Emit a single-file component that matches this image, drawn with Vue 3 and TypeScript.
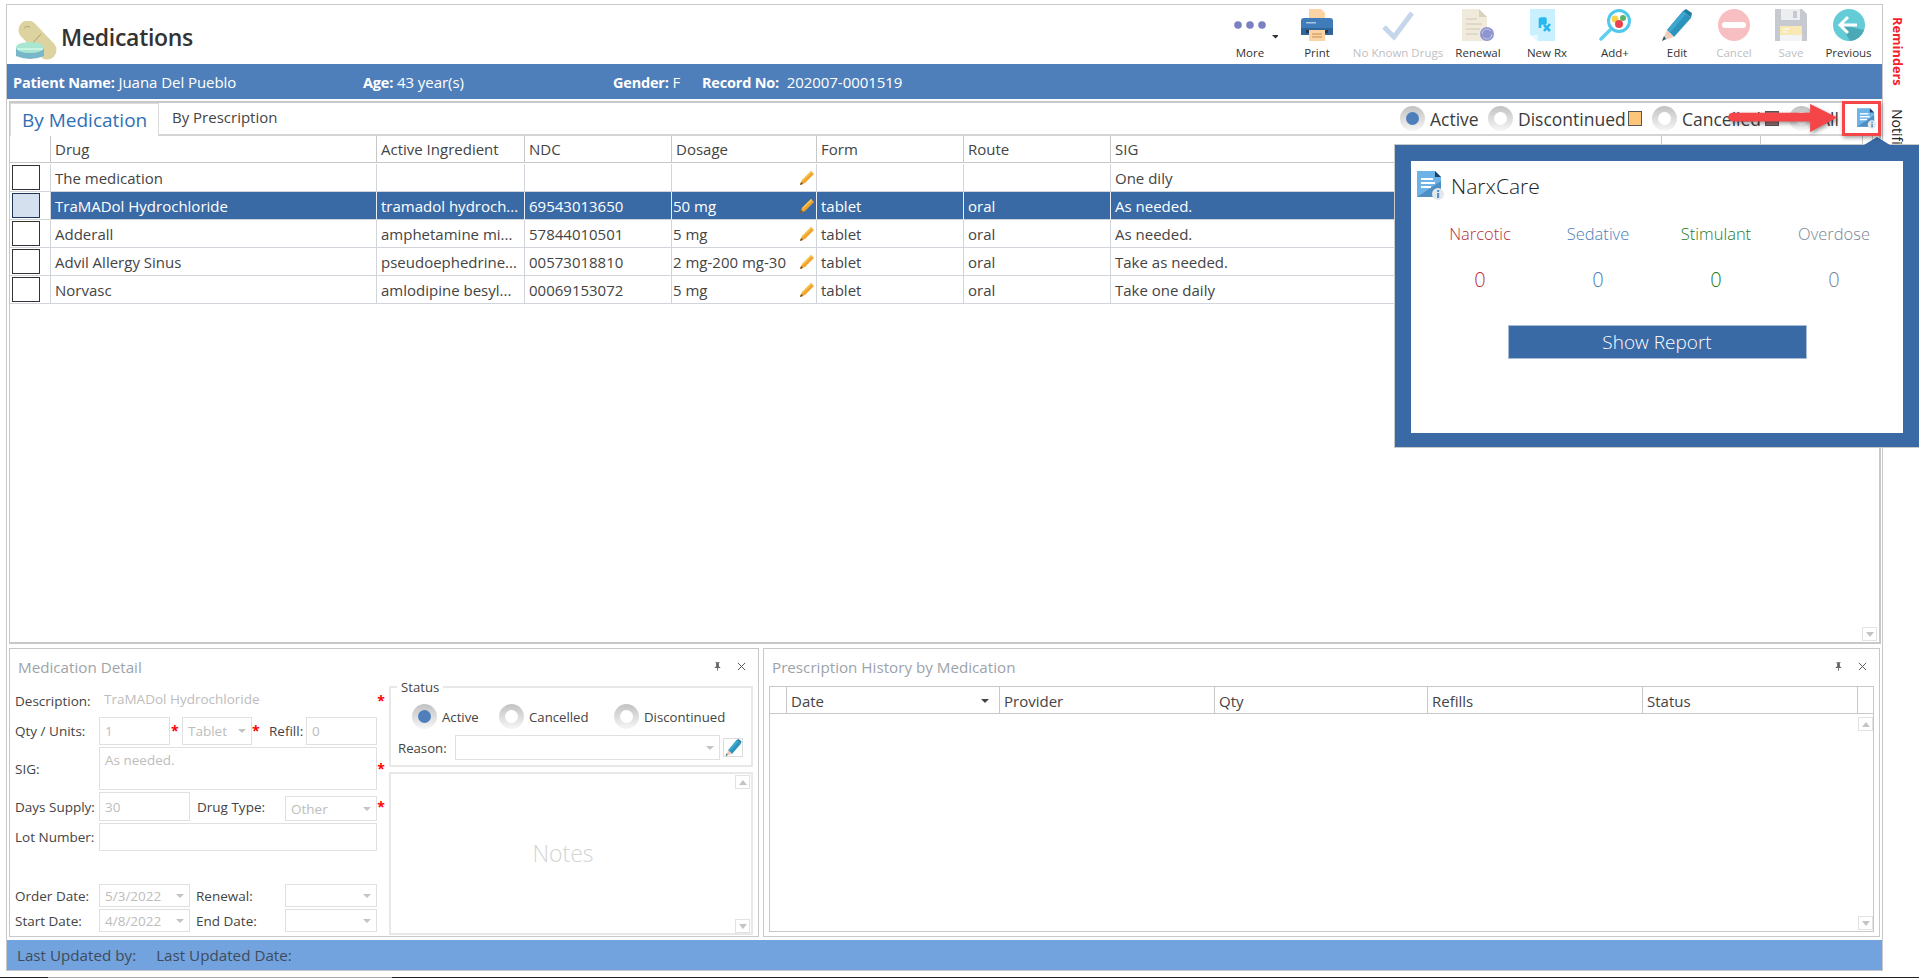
<script setup lang="ts">
interface Med { drug: string; ing: string; ndc: string; dose: string; form: string; route: string; sig: string; sel?: boolean }
const meds: Med[] = [
  { drug: 'The medication', ing: '', ndc: '', dose: '', form: '', route: '', sig: 'One dily' },
  { drug: 'TraMADol Hydrochloride', ing: 'tramadol hydroch...', ndc: '69543013650', dose: '50 mg', form: 'tablet', route: 'oral', sig: 'As needed.', sel: true },
  { drug: 'Adderall', ing: 'amphetamine mi...', ndc: '57844010501', dose: '5 mg', form: 'tablet', route: 'oral', sig: 'As needed.' },
  { drug: 'Advil Allergy Sinus', ing: 'pseudoephedrine...', ndc: '00573018810', dose: '2 mg-200 mg-30', form: 'tablet', route: 'oral', sig: 'Take as needed.' },
  { drug: 'Norvasc', ing: 'amlodipine besyl...', ndc: '00069153072', dose: '5 mg', form: 'tablet', route: 'oral', sig: 'Take one daily' },
]
const heads: string[] = ['', 'Drug', 'Active Ingredient', 'NDC', 'Dosage', 'Form', 'Route', 'SIG', '', '', '', '']
const histHeads: string[] = ['', 'Date', 'Provider', 'Qty', 'Refills', 'Status', '']
const narx = [
  { label: 'Narcotic', cls: 'red' },
  { label: 'Sedative', cls: 'blue' },
  { label: 'Stimulant', cls: 'green' },
  { label: 'Overdose', cls: 'grey' },
]
</script>

<template>
  <div class="page">
    <svg class="defs" width="0" height="0">
      <symbol id="pen" viewBox="0 0 32 32">
        <polygon points="6,21 22,2 30,9 13,28" fill="#2b93bc" />
        <polygon points="6,21 22,2 25,5 9,24" fill="#3fa7cf" />
        <polygon points="22,2 25,0 31,4 30,9" fill="#1f7ea3" />
        <polygon points="6,21 13,28 1,32" fill="#f5cdb6" />
        <polygon points="3,27 5,30 1,32" fill="#1d5f7a" />
      </symbol>
      <symbol id="file" viewBox="0 0 28 29">
        <polygon points="0,0 18,0 24,6 24,26 0,26" fill="#6db3e8" />
        <polygon points="0,26 24,10 24,26" fill="#4f8fc4" />
        <polygon points="18,0 24,6 18,6" fill="#1f3f66" />
        <rect x="4" y="7" width="12" height="2" fill="#fff" />
        <rect x="4" y="11" width="14" height="2" fill="#fff" />
        <rect x="4" y="15" width="10" height="2" fill="#fff" />
        <circle cx="21" cy="23" r="6" fill="#e3e8ee" />
        <rect x="20" y="22" width="2.2" height="5" fill="#5b93c6" />
        <rect x="20" y="19" width="2.2" height="2" fill="#5b93c6" />
      </symbol>
      <symbol id="pin" viewBox="0 0 10 12">
        <path d="M2 0h6v1H7v5l2 1v1H5.6v4H4.4V8H1V7l2-1V1H2z" fill="#666" />
      </symbol>
      <symbol id="close" viewBox="0 0 10 10">
        <path d="M1 1l8 8M9 1L1 9" stroke="#555" stroke-width="1.1" fill="none" />
      </symbol>
    </svg>

    <div class="desk">
      <div class="window">
        <header class="titlebar">
          <div class="brand">
            <svg class="logo" viewBox="0 0 41 39">
              <line x1="12" y1="9" x2="31" y2="29" stroke="#ddd3a0" stroke-width="19" stroke-linecap="round" />
              <line x1="25" y1="13" x2="15" y2="24" stroke="#a89f6f" stroke-width="1" />
              <path d="M8 7q3-3 6-1" stroke="#a89f6f" fill="none" stroke-width="0.8" />
              <path d="M0 27v8q14 6 28 0v-8z" fill="#79b6c9" />
              <ellipse cx="14" cy="26.500" rx="14" ry="5.500" fill="#a8e6cf" />
              <path d="M1 28h26" stroke="#e9fff6" stroke-width="1" />
            </svg>
            <h1>Medications</h1>
          </div>
          <nav class="tools">
            <div class="tool">
              <svg class="ic more" viewBox="0 0 44 32">
                <circle cx="4" cy="16" r="3.800" fill="#7a80c2" /><circle cx="16" cy="16" r="3.800" fill="#7a80c2" /><circle cx="28" cy="16" r="3.800" fill="#7a80c2" />
                <polygon points="38,26 45,26 41.500,29.500" fill="#333" />
              </svg>
              <span>More</span>
            </div>
            <div class="tool">
              <svg class="ic" viewBox="0 0 32 32">
                <polygon points="8,0 20,0 24,4 24,12 8,12" fill="#fbd3a5" />
                <rect x="0" y="9" width="32" height="17" rx="3" fill="#3f7cb8" />
                <rect x="0" y="19" width="32" height="7" fill="#2f6598" />
                <rect x="5" y="13" width="10" height="1.500" fill="#a9c8e6" />
                <rect x="5" y="21" width="22" height="3" fill="#1d3b5a" />
                <rect x="8" y="21" width="16" height="11" fill="#fbd3a5" />
                <path d="M11 25h10M11 28h10" stroke="#c98f50" stroke-width="1" />
              </svg>
              <span>Print</span>
            </div>
            <div class="tool off">
              <svg class="ic" viewBox="0 0 32 32">
                <path d="M2 18l10 10L30 4" fill="none" stroke="#c5d6ea" stroke-width="5" />
              </svg>
              <span>No Known Drugs</span>
            </div>
            <div class="tool">
              <svg class="ic" viewBox="0 0 32 32">
                <polygon points="0,0 17,0 25,8 25,32 0,32" fill="#efeadb" />
                <polygon points="17,0 25,8 17,8" fill="#d8d2bd" />
                <path d="M4 10h11M4 15h16M4 20h14M4 25h12" stroke="#cfc8ae" stroke-width="1" />
                <circle cx="25" cy="25" r="7" fill="#8e94d0" />
                <path d="M20 25a5 5 0 0 1 9-3M30 25a5 5 0 0 1-9 3" stroke="#c4c8ea" fill="none" stroke-width="1" />
              </svg>
              <span>Renewal</span>
            </div>
            <div class="tool">
              <svg class="ic rx" viewBox="0 0 25 32">
                <polygon points="0,0 25,0 25,32 8,32 0,26" fill="#c9f0ff" />
                <polygon points="0,26 8,26 8,32" fill="#e6f9ff" />
                <rect x="10" y="9" width="6" height="6" rx="1" fill="#28b8ee" stroke="#28b8ee" stroke-width="1.500" />
                <path d="M10 9v10M14 16l6 6M20 15l-6 7" stroke="#28b8ee" stroke-width="2.600" fill="none" />
              </svg>
              <span>New Rx</span>
            </div>
            <div class="tool">
              <svg class="ic" viewBox="0 0 32 32">
                <line x1="11" y1="21" x2="2" y2="30" stroke="#5fd0ee" stroke-width="3.500" stroke-linecap="round" />
                <circle cx="20" cy="12" r="10.500" fill="#fff" stroke="#4fc8ec" stroke-width="3" />
                <circle cx="16" cy="10" r="3.500" fill="#f6d44a" />
                <circle cx="24" cy="9" r="3" fill="#58b368" />
                <circle cx="20" cy="15" r="4" fill="#e8434f" />
              </svg>
              <span>Add+</span>
            </div>
            <div class="tool">
              <svg class="ic"><use href="#pen" /></svg>
              <span>Edit</span>
            </div>
            <div class="tool off">
              <svg class="ic" viewBox="0 0 32 32">
                <circle cx="16" cy="16" r="16" fill="#f8bfc2" />
                <rect x="4" y="13" width="24" height="6" rx="3" fill="#fff" />
              </svg>
              <span>Cancel</span>
            </div>
            <div class="tool off">
              <svg class="ic" viewBox="0 0 32 32">
                <polygon points="0,0 27,0 32,5 32,32 0,32" fill="#c6c9d0" />
                <rect x="6" y="0" width="19" height="11" fill="#eceef1" />
                <rect x="18" y="2" width="4" height="7" fill="#c6c9d0" />
                <rect x="5" y="17" width="22" height="15" fill="#f3f4f6" />
                <rect x="5" y="17" width="22" height="9" fill="#f8e9b4" />
                <path d="M8 20h7M8 23h4" stroke="#fff" stroke-width="1" />
              </svg>
              <span>Save</span>
            </div>
            <div class="tool">
              <svg class="ic" viewBox="0 0 32 32">
                <circle cx="16" cy="16" r="16" fill="#63ccd6" />
                <path d="M8 16L31 21A16 16 0 0 1 17 32z" fill="#4aa9b5" />
                <path d="M15 8l-8 8 8 8M7 16h17" stroke="#fff" stroke-width="3" fill="none" />
              </svg>
              <span>Previous</span>
            </div>
          </nav>
        </header>

        <div class="patient">
          <span class="p1"><b>Patient Name:</b> Juana Del Pueblo</span>
          <span class="p2"><b>Age:</b> 43 year(s)</span>
          <span class="p3"><b>Gender:</b> F</span>
          <span class="p4"><b>Record No:</b>&nbsp; 202007-0001519</span>
        </div>

        <section class="main">
          <div class="tabs">
            <div class="tab active">By Medication</div>
            <div class="tab">By Prescription</div>
            <div class="filters">
              <i class="radio on"></i><span class="f f-a">Active</span>
              <i class="radio"></i><span class="f f-d">Discontinued</span><i class="swatch orange"></i>
              <i class="radio"></i><span class="f f-c">Cancelled</span><i class="swatch brown"></i>
              <i class="radio"></i><span class="f f-l">All</span>
              <svg class="file-btn"><use href="#file" /></svg>
            </div>
          </div>
          <div class="grid">
            <div class="gcell head" v-for="(h, i) in heads" :key="'h' + i">{{ h }}</div>
            <template v-for="m in meds" :key="m.drug">
              <div class="gcell chk"><i class="box" :class="{ sel: m.sel }"></i></div>
              <div class="gcell" :class="{ sel: m.sel }">{{ m.drug }}</div>
              <div class="gcell" :class="{ sel: m.sel }">{{ m.ing }}</div>
              <div class="gcell" :class="{ sel: m.sel }">{{ m.ndc }}</div>
              <div class="gcell dose" :class="{ sel: m.sel }">
                <span>{{ m.dose }}</span>
                <svg class="pencil" viewBox="0 0 16 16">
                  <path d="M1 15l2-5L12 1l3 3-9 9z" fill="#f0a52a" />
                  <path d="M3 10L12 1l1 1-9 9z" fill="#f8c860" />
                  <path d="M1 15l1-3 2 2z" fill="#6b4a1e" />
                </svg>
              </div>
              <div class="gcell" :class="{ sel: m.sel }">{{ m.form }}</div>
              <div class="gcell" :class="{ sel: m.sel }">{{ m.route }}</div>
              <div class="gcell" :class="{ sel: m.sel }">{{ m.sig }}</div>
              <div class="gcell" :class="{ sel: m.sel }"></div>
              <div class="gcell" :class="{ sel: m.sel }"></div>
              <div class="gcell" :class="{ sel: m.sel }"></div>
              <div class="gcell" :class="{ sel: m.sel }"></div>
            </template>
          </div>
          <div class="main-fill"><i class="sbtn"><b class="dn"></b></i></div>
        </section>

        <div class="lower">
          <section class="panel">
            <div class="phead">
              <span class="ptitle">Medication Detail</span>
              <svg class="pin"><use href="#pin" /></svg>
              <svg class="cls"><use href="#close" /></svg>
            </div>
            <div class="detail">
              <div class="form">
                <div class="row h28">
                  <label class="lab">Description:</label>
                  <span class="ro">TraMADol Hydrochloride</span>
                  <em class="star">*</em>
                </div>
                <div class="row h28">
                  <label class="lab">Qty / Units:</label>
                  <span class="inp w71">1</span>
                  <em class="star s12">*</em>
                  <span class="inp sel2 w70">Tablet<b class="caret"></b></span>
                  <em class="star s17">*</em>
                  <label class="lab w37">Refill:</label>
                  <span class="inp w71">0</span>
                </div>
                <div class="row h43">
                  <label class="lab">SIG:</label>
                  <span class="inp area">As needed.</span>
                  <em class="star">*</em>
                </div>
                <div class="row h29">
                  <label class="lab">Days Supply:</label>
                  <span class="inp w91">30</span>
                  <label class="lab l2">Drug Type:</label>
                  <span class="inp sel2 w92 low">Other<b class="caret"></b></span>
                  <em class="star">*</em>
                </div>
                <div class="row h28">
                  <label class="lab">Lot Number:</label>
                  <span class="inp wide"></span>
                </div>
                <div class="row h23 dates">
                  <label class="lab">Order Date:</label>
                  <span class="inp sel2 w91">5/3/2022<b class="caret"></b></span>
                  <label class="lab l2 l3">Renewal:</label>
                  <span class="inp sel2 w92"><b class="caret"></b></span>
                </div>
                <div class="row h23">
                  <label class="lab">Start Date:</label>
                  <span class="inp sel2 w91">4/8/2022<b class="caret"></b></span>
                  <label class="lab l2 l3">End Date:</label>
                  <span class="inp sel2 w92"><b class="caret"></b></span>
                </div>
              </div>
              <div class="side-col">
                <div class="status">
                  <span class="legend">Status</span>
                  <div class="st-radios">
                    <i class="radio on"></i><span class="st-a">Active</span>
                    <i class="radio"></i><span class="st-c">Cancelled</span>
                    <i class="radio"></i><span>Discontinued</span>
                  </div>
                  <div class="reason">
                    <label>Reason:</label>
                    <span class="inp sel2 w265"><b class="caret"></b></span>
                    <span class="editbtn"><svg class="pen16"><use href="#pen" /></svg></span>
                  </div>
                </div>
                <div class="notes">
                  Notes
                  <i class="sbtn up-s"><b class="up"></b></i>
                  <i class="sbtn dn-s"><b class="dn"></b></i>
                </div>
              </div>
            </div>
          </section>

          <section class="panel">
            <div class="phead">
              <span class="ptitle">Prescription History by Medication</span>
              <svg class="pin"><use href="#pin" /></svg>
              <svg class="cls"><use href="#close" /></svg>
            </div>
            <div class="hist">
              <div class="hhead">
                <div class="hcell" v-for="(h, i) in histHeads" :key="'x' + i">
                  {{ h }}<b v-if="h === 'Date'" class="sort"></b>
                </div>
              </div>
              <div class="hbody">
                <i class="sbtn"><b class="up"></b></i>
                <i class="sbtn"><b class="dn"></b></i>
              </div>
            </div>
          </section>
        </div>

        <footer class="statusbar">
          <span>Last Updated by:</span>
          <span>Last Updated Date:</span>
        </footer>
      </div>

      <aside class="rail">
        <span class="rem">Reminders</span>
        <span class="not">Notifications</span>
      </aside>
    </div>
    <div class="taskline"></div>

    <div class="popup">
      <i class="pcaret"></i>
      <div class="pinner">
        <div class="ptop">
          <svg class="pfile"><use href="#file" /></svg>
          <span>NarxCare</span>
        </div>
        <div class="pgrid">
          <div v-for="n in narx" :key="n.label" class="pcol" :class="n.cls">
            <span class="pl">{{ n.label }}</span>
            <span class="pv">0</span>
          </div>
        </div>
        <button class="report">Show Report</button>
      </div>
    </div>

    <i class="redbox"></i>
    <svg class="arrow" viewBox="0 0 116 32">
      <path d="M6 11H86V2L114 16 86 31V20H6a4.500 4.500 0 0 1 0-9z" fill="#f44548" />
    </svg>
  </div>
</template>

<style>
html, body { margin: 0; padding: 0; background: #fff; }
</style>

<style scoped>
.page { position: relative; width: 1919px; height: 978px; overflow: hidden; background: #fff; font-family: "Open Sans", "Liberation Sans", sans-serif; color: #3c3c3c; font-stretch: 90%; }
.defs { position: absolute; }
.desk { display: flex; height: 977px; }
.taskline { height: 1px; background: linear-gradient(to right, #222 48px, #aaa 48px, #aaa 392px, #222 392px); }
.window { margin: 4px 0 0 6px; width: 1877px; height: 967px; box-sizing: border-box; border: 1px solid #c8c8c8; display: flex; flex-direction: column; }
.titlebar { height: 59px; display: flex; justify-content: space-between; flex: none; }
.brand { display: flex; align-items: center; padding: 0 0 0 9px; }
.logo { width: 41px; height: 39px; margin: 11px 4px 0 0; }
h1 { margin: 4px 0 0; font-size: 23px; font-weight: 600; color: #333; letter-spacing: -0.3px; }
.tools { display: grid; grid-template-columns: 56px 78px 84px 76px 62px 74px 50px 64px 50px 65px; padding-right: 1px; }
.tool { display: flex; flex-direction: column; align-items: center; font-size: 11.5px; color: #333; padding-top: 4px; white-space: nowrap; }
.tool.off { color: #c0c0c0; }
.ic { width: 32px; height: 32px; display: block; }
.ic.rx { width: 25px; margin-right: 9px; }
.ic.more { width: 44px; margin-left: 12px; }
.tool span { margin-top: 4px; line-height: 16px; }
.patient { height: 35px; flex: none; background: #4f7fba; color: #fff; font-size: 15px; display: flex; align-items: center; padding-left: 6px; letter-spacing: -0.05px; }
.patient b { font-weight: 700; font-size: 14.5px; letter-spacing: -0.2px; }
.p1 { width: 350px; } .p2 { width: 250px; } .p3 { width: 89px; }
.main { margin: 2px 1px 0 2px; height: 543px; box-sizing: border-box; border: 2px solid #c8c8c8; border-left-width: 1px; flex: none; display: flex; flex-direction: column; }
.tabs { height: 33px; flex: none; display: flex; border-bottom: 2px solid #d4d4d4; box-sizing: border-box; }
.tab { font-size: 15px; padding: 4px 0 0 13px; width: 130px; color: #444; }
.tab.active { color: #2f6fb5; font-size: 19px; width: 149px; box-sizing: border-box; border: 1px solid #dcdcdc; border-bottom: 0; padding: 3px 0 0 11px; white-space: nowrap; background: #fff; height: 33px; }
.filters { margin-left: auto; display: flex; align-items: center; font-size: 17.5px; padding-right: 2px; height: 31px; }
.f { margin-left: 5px; white-space: nowrap; }
.f-a { width: 58px; } .f-d { width: 110px; } .f-c { width: 83px; } .f-l { width: 38px; }
.radio { display: block; width: 25px; height: 25px; border-radius: 50%; flex: none; background: linear-gradient(to bottom, #c2c2c2, #f6f6f6); position: relative; }
.radio::after { content: ""; position: absolute; left: 6px; top: 6px; width: 13px; height: 13px; border-radius: 50%; background: #fff; }
.radio.on::after { background: #4f7fba; }
.swatch { display: block; width: 14px; height: 15px; box-sizing: border-box; border: 1px solid #555; flex: none; margin-right: 10px; }
.orange { background: #fbc679; } .brown { background: #8f6d6d; }
.file-btn { width: 20px; height: 21px; }
.grid { display: grid; grid-template-columns: 41px 326px 148px 147px 145px 147px 147px 551px 99px 102px 10px 7px; grid-auto-rows: 28px; flex: none; font-size: 15px; }
.gcell { box-sizing: border-box; border-right: 1px solid #d0d5dc; border-bottom: 1px solid #d0d5dc; padding-left: 4px; display: flex; align-items: center; white-space: nowrap; overflow: hidden; color: #444; }
.gcell.head { height: 27px; border-color: #c8c8c8; }
.gcell.sel { background: #3a6aa5; color: #fff; border-right-color: #e8eef6; }
.chk { padding-left: 2px; }
.box { display: block; width: 28px; height: 25px; box-sizing: border-box; border: 1px solid #333; background: #fff; }
.box.sel { background: #d5e0ee; border-color: #1d3558; }
.dose { padding-left: 1px; justify-content: space-between; }
.pencil { width: 16px; height: 16px; margin-right: 1px; flex: none; }
.main-fill { flex: 1; display: flex; justify-content: flex-end; align-items: flex-end; padding: 0 2px 1px 0; }
.sbtn { display: flex; align-items: center; justify-content: center; width: 15px; height: 14px; box-sizing: border-box; border: 1px solid #e2e2e2; background: #fff; }
.up { width: 0; height: 0; border: 4px solid transparent; border-top: 0; border-bottom: 5px solid #c4c4c4; }
.dn { width: 0; height: 0; border: 4px solid transparent; border-bottom: 0; border-top: 5px solid #c4c4c4; }
.lower { display: grid; grid-template-columns: 750px 1117px; gap: 4px; margin: 4px 1px 0 2px; height: 289px; flex: none; }
.panel { box-sizing: border-box; border: 1px solid #c8c8c8; display: flex; flex-direction: column; min-width: 0; }
.phead { height: 37px; flex: none; display: flex; align-items: center; font-size: 15.200px; box-sizing: border-box; padding: 0 12px 2px 8px; }
.ptitle { flex: 1; color: #9ca3aa; }
.pin { width: 7px; height: 9px; margin-right: 16px; }
.cls { width: 9px; height: 9px; }
.detail { display: flex; flex: 1; }
.form { width: 379px; box-sizing: border-box; padding: 1px 0 0 5px; display: flex; flex-direction: column; gap: 2px; flex: none; font-size: 13.5px; color: #444; }
.row { display: flex; align-items: center; }
.h28 { height: 28px; } .h43 { height: 43px; } .h29 { height: 29px; } .h23 { height: 23px; }
.dates { margin-top: 31px; }
.lab { width: 84px; flex: none; white-space: nowrap; }
.w37 { width: 37px; }
.l2 { width: 88px; margin-left: 7px; }
.l3 { margin-left: 6px; width: 89px; }
.ro { width: 278px; padding-left: 5px; box-sizing: border-box; color: #bdbdbd; margin-top: -4px; }
.inp { display: flex; align-items: center; height: 100%; box-sizing: border-box; border: 1px solid #e0e0e0; color: #bdbdbd; padding-left: 5px; position: relative; flex: none; font-size: 13.5px; white-space: nowrap; }
.w71 { width: 71px; } .w70 { width: 70px; } .w91 { width: 91px; } .w92 { width: 92px; } .wide { width: 278px; } .w265 { width: 265px; height: 25px; }
.area { width: 278px; align-items: flex-start; padding-top: 3px; }
.low { height: 25px; align-self: flex-end; }
.sel2 .caret { position: absolute; right: 5px; top: 50%; margin-top: -2px; width: 0; height: 0; border: 4px solid transparent; border-bottom: 0; border-top: 4px solid #c4c4c4; }
.star { font-style: normal; color: #f00; font-weight: 700; font-size: 14px; line-height: 14px; width: 12px; text-align: center; flex: none; margin: 0 0 0 -4px; padding-left: 2px; }
.s12 { margin: 0; padding: 0 0 0 1px; width: 12px; box-sizing: border-box; text-align: left; }
.s17 { margin: 0; padding: 0; width: 17px; text-align: left; }
.side-col { width: 364px; display: flex; flex-direction: column; gap: 5px; }
.status { position: relative; height: 81px; box-sizing: border-box; border: 2px solid #e8e8e8; flex: none; padding: 16px 0 0 21px; font-size: 13.2px; color: #444; }
.legend { position: absolute; left: 6px; top: -10px; background: #fff; padding: 0 4px; line-height: 18px; }
.st-radios { display: flex; align-items: center; gap: 5px; }
.st-a { width: 52px; } .st-c { width: 80px; }
.reason { display: flex; align-items: center; margin: 6px 0 0 -14px; height: 25px; }
.reason label { width: 57px; flex: none; }
.editbtn { width: 20px; height: 19px; border: 1px solid #dcdcdc; box-sizing: border-box; margin-left: 3px; display: flex; align-items: center; justify-content: center; }
.pen16 { width: 17px; height: 17px; }
.notes { position: relative; height: 163px; box-sizing: border-box; border: 2px solid #e8e8e8; flex: none; display: flex; align-items: center; justify-content: center; font-size: 23px; font-weight: 300; color: #d4d4d4; padding: 0 16px 2px 0; }
.up-s { position: absolute; right: 1px; top: 1px; }
.dn-s { position: absolute; right: 1px; bottom: 0; }
.hist { margin: 0 5px; height: 246px; box-sizing: border-box; border: 1px solid #c8c8c8; display: flex; flex-direction: column; }
.hhead { display: grid; grid-template-columns: 17px 213px 215px 213px 215px 215px 15px; height: 27px; flex: none; border-bottom: 1px solid #c8c8c8; box-sizing: border-box; font-size: 15px; }
.hcell { border-right: 1px solid #c8c8c8; padding: 1px 0 0 4px; display: flex; align-items: center; position: relative; box-sizing: border-box; color: #444; }
.hcell:last-child { border-right: 0; }
.sort { position: absolute; right: 10px; top: 12px; width: 0; height: 0; border: 4px solid transparent; border-bottom: 0; border-top: 4px solid #444; }
.hbody { flex: 1; display: flex; flex-direction: column; justify-content: space-between; align-items: flex-end; padding: 3px 0 1px; }
.statusbar { margin-top: 3px; height: 30px; background: #72a3de; flex: none; display: flex; align-items: center; gap: 20px; padding-left: 10px; font-size: 15.200px; color: #3f4b5c; }
.rail { flex: 1; display: flex; flex-direction: column; align-items: center; padding: 17px 7px 0 0; gap: 23px; }
.rail span { writing-mode: vertical-rl; white-space: nowrap; }
.rem { color: #f5222d; font-weight: 700; font-size: 12.800px; }
.not { color: #222; font-size: 14px; }
.popup { position: absolute; left: 1394px; top: 144px; width: 525px; height: 304px; box-sizing: border-box; background: #3a6aa5; border: 1px solid #c8c8c8; border-right: 0; padding: 16px 16px 14px 16px; }
.pcaret { position: absolute; left: 469px; top: -8px; width: 0; height: 0; border-left: 13px solid transparent; border-right: 13px solid transparent; border-bottom: 8px solid #3a6aa5; }
.pinner { background: #fff; height: 272px; display: flex; flex-direction: column; align-items: center; }
.ptop { align-self: flex-start; display: flex; align-items: center; padding: 10px 0 0 6px; font-size: 21px; font-weight: 300; color: #222; gap: 6px; }
.pfile { width: 28px; height: 29px; }
.pgrid { display: grid; grid-template-columns: repeat(4, 118px); margin-top: 23px; }
.pcol { display: flex; flex-direction: column; align-items: center; font-weight: 300; }
.pl { font-size: 16.500px; line-height: 22px; }
.pv { font-size: 20px; line-height: 24px; margin-top: 23px; }
.red { color: #b8323b; } .blue { color: #4a80b8; } .green { color: #1f7a1f; } .grey { color: #788596; }
.report { margin-top: 33px; width: 299px; height: 34px; background: #3a6aa5; border: 1px solid #a8bcd6; color: #fff; font: 300 19px "Open Sans", sans-serif; font-stretch: 90%; padding: 0; }
.redbox { position: absolute; left: 1842px; top: 101px; width: 39px; height: 35px; box-sizing: border-box; border: 3px solid #f44548; box-shadow: 1px 2px 4px rgba(0,0,0,.35); }
.arrow { position: absolute; left: 1726px; top: 102px; width: 114px; height: 31px; filter: drop-shadow(1px 2px 2px rgba(0,0,0,.4)); }
</style>
